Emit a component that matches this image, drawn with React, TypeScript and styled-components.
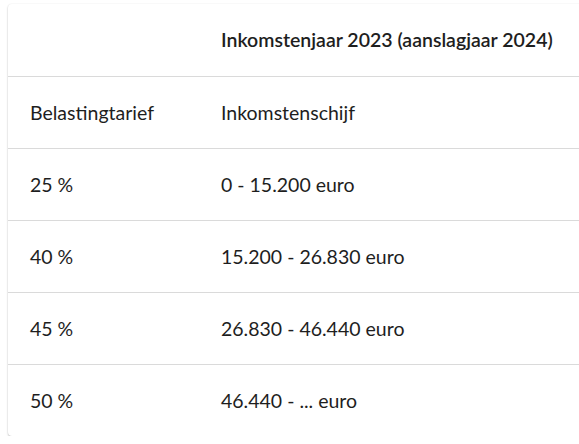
import React from "react";
import styled, { createGlobalStyle } from "styled-components";

const Global = createGlobalStyle`
  html, body { margin: 0; padding: 0; background: #ffffff; overflow: hidden; }
  body { font-family: "Lato", "Open Sans", sans-serif; color: #1e1e1e; }
`;

const Page = styled.div`
  padding: 4px 0 0 8px;
  width: 620px;
`;

const Card = styled.div`
  background: #fff;
  border-radius: 4px;
  box-shadow: 0 1px 2px rgba(0, 0, 0, 0.25), 0 0 2px rgba(0, 0, 0, 0.06);
  overflow: hidden;
`;

const Table = styled.table`
  width: 100%;
  border-collapse: collapse;
`;

const Row = styled.tr<{ $last?: boolean }>`
  height: 72px;
  border-bottom: ${(p) => (p.$last ? "none" : "1px solid #dadada")};
`;

const Cell = styled.td<{ $first?: boolean; $head?: boolean }>`
  padding: 0 0 0 ${(p) => (p.$first ? "22px" : "0")};
  width: ${(p) => (p.$first ? "191px" : "auto")};
  font-size: 19.5px;
  font-weight: ${(p) => (p.$head ? 600 : 400)};
  text-align: left;
  vertical-align: middle;
  white-space: nowrap;
`;

const rows = [
  ["Belastingtarief", "Inkomstenschijf"],
  ["25 %", "0 - 15.200 euro"],
  ["40 %", "15.200 - 26.830 euro"],
  ["45 %", "26.830 - 46.440 euro"],
  ["50 %", "46.440 - ... euro"],
];

export default function App() {
  return (
    <>
      <Global />
      <Page>
        <Card>
          <Table>
            <tbody>
              <Row>
                <Cell $first></Cell>
                <Cell $head>Inkomstenjaar 2023 (aanslagjaar 2024)</Cell>
              </Row>
              {rows.map((r, i) => (
                <Row key={i} $last={i === rows.length - 1}>
                  <Cell $first>{r[0]}</Cell>
                  <Cell>{r[1]}</Cell>
                </Row>
              ))}
            </tbody>
          </Table>
        </Card>
      </Page>
    </>
  );
}
